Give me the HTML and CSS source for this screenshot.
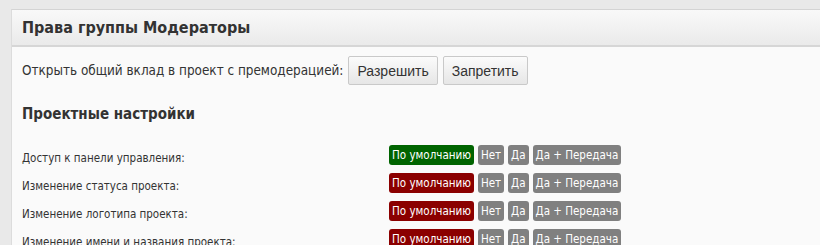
FILE: index.html
```html
<!DOCTYPE html>
<html lang="ru">
<head>
<meta charset="UTF-8">
<title>Права группы</title>
<link rel="stylesheet" href="styles.css">
</head>
<body>

<div class="panel">
    <div class="panel-head">Права группы Модераторы</div>
    <div class="panel-body">
        <div class="moderation">
            <span>Открыть общий вклад в проект с премодерацией:</span>
            <button class="btn">Разрешить</button>
            <button class="btn">Запретить</button>
        </div>

        <h3>Проектные настройки</h3>

        <div class="rights">
            <div class="row">
                <div class="label">Доступ к панели управления:</div>
                <div class="tags">
                    <span class="tag tag-green">По умолчанию</span>
                    <span class="tag">Нет</span>
                    <span class="tag">Да</span>
                    <span class="tag">Да + Передача</span>
                </div>
            </div>
            <div class="row">
                <div class="label">Изменение статуса проекта:</div>
                <div class="tags">
                    <span class="tag tag-red">По умолчанию</span>
                    <span class="tag">Нет</span>
                    <span class="tag">Да</span>
                    <span class="tag">Да + Передача</span>
                </div>
            </div>
            <div class="row">
                <div class="label">Изменение логотипа проекта:</div>
                <div class="tags">
                    <span class="tag tag-red">По умолчанию</span>
                    <span class="tag">Нет</span>
                    <span class="tag">Да</span>
                    <span class="tag">Да + Передача</span>
                </div>
            </div>
            <div class="row">
                <div class="label">Изменение имени и названия проекта:</div>
                <div class="tags">
                    <span class="tag tag-red">По умолчанию</span>
                    <span class="tag">Нет</span>
                    <span class="tag">Да</span>
                    <span class="tag">Да + Передача</span>
                </div>
            </div>
        </div>
    </div>
</div>

</body>
</html>
```

FILE: styles.css
```css
html, body {
    height: 245px;
    overflow: hidden;
}

body {
    margin: 0;
    padding: 9px 0 0 11px;
    box-sizing: border-box;
    background-color: #e9e9e9;
    font-family: "DejaVu Sans", Verdana, sans-serif;
    font-stretch: condensed;
    color: #333;
}

.panel {
    background-color: #fafafa;
    border-top: 1px solid #d4d4d4;
    border-left: 1px solid #dcdcdc;
    width: 900px;
}

.panel-head {
    height: 35px;
    line-height: 36px;
    padding-left: 10px;
    font-size: 16px;
    font-weight: bold;
    color: #333;
    background: linear-gradient(#f9f9f9, #eaeaea);
    border-bottom: 2px solid #d6d6d6;
}

.panel-body {
    padding: 9px 10px;
}

.moderation {
    display: flex;
    align-items: center;
    gap: 5px;
    font-size: 13.4px;
}

.btn {
    height: 29px;
    padding: 0 8px;
    font-family: "Liberation Sans", Arial, sans-serif;
    font-size: 14px;
    color: #333;
    background: linear-gradient(#fbfbfb, #e6e6e6);
    border: 1px solid #c9c9c9;
    border-radius: 2px;
}

h3 {
    margin: 20px 0 0 0;
    font-size: 15px;
    font-weight: bold;
    color: #333;
}

.rights {
    margin-top: 22px;
    display: flex;
    flex-direction: column;
    gap: 8px;
}

.row {
    display: flex;
    align-items: center;
}

.label {
    width: 367px;
    font-size: 11.5px;
    padding-top: 5px;
}

.tags {
    display: flex;
    gap: 4px;
}

.tag {
    height: 20px;
    line-height: 20px;
    padding: 0 3px;
    font-size: 11.5px;
    color: #fff;
    background-color: #808080;
    border-radius: 3px;
}

.tag-green {
    background-color: #006400;
}

.tag-red {
    background-color: #8b0000;
}
```
